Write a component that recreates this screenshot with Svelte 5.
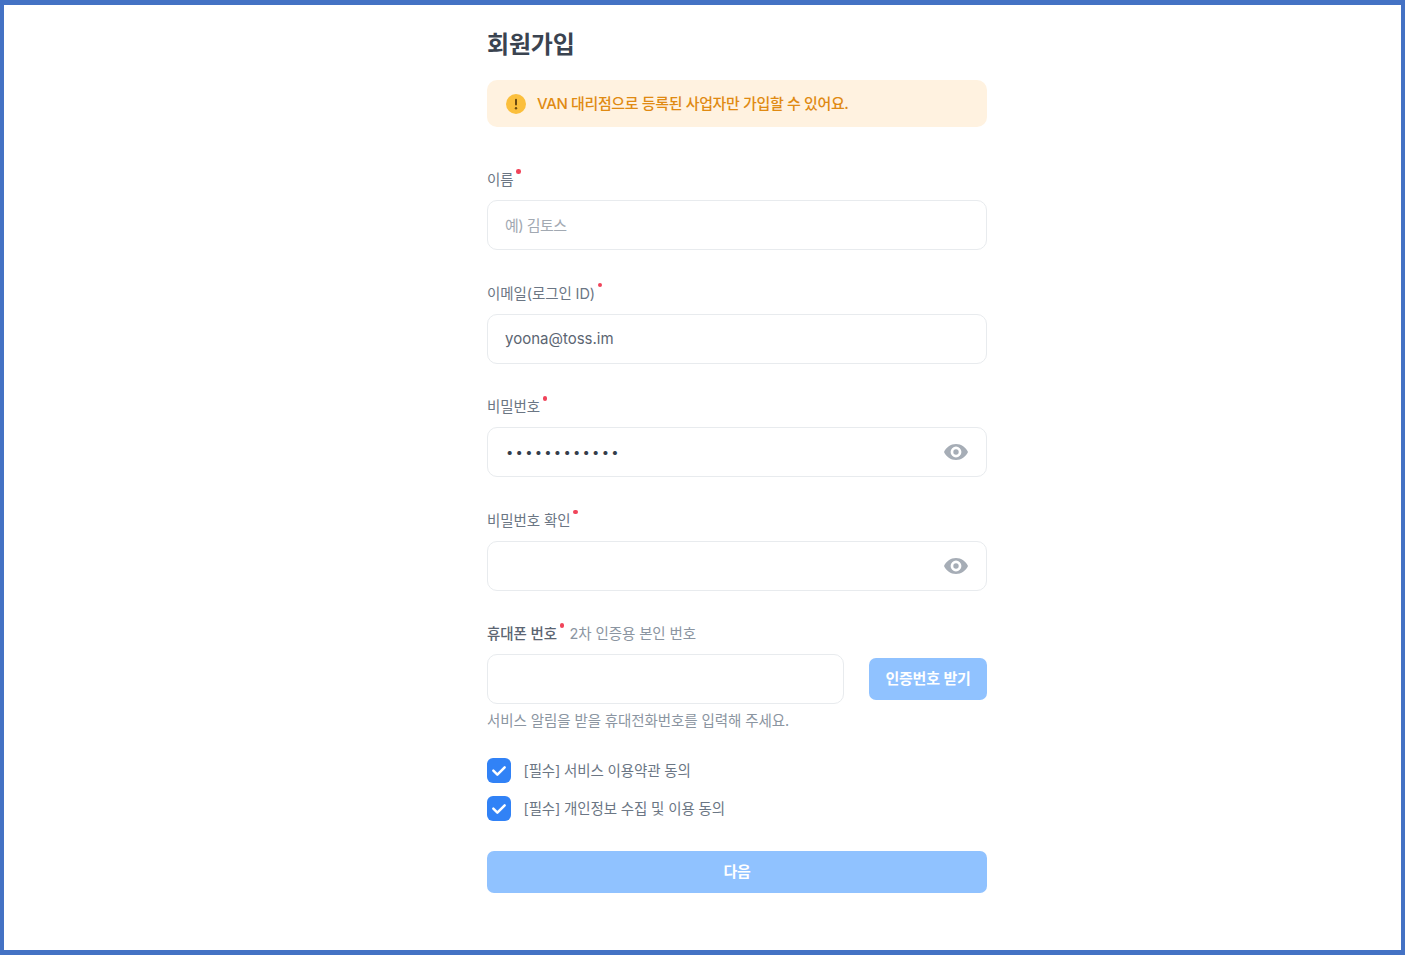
<script lang="ts">
    interface Field {
        label: string;
        type: string;
        placeholder?: string;
        value?: string;
        eye?: boolean;
    }

    const fields: Field[] = [
        { label: "이름", type: "text", placeholder: "예) 김토스" },
        { label: "이메일(로그인 ID)", type: "text", value: "yoona@toss.im" },
        { label: "비밀번호", type: "password", value: "123456789012", eye: true },
        { label: "비밀번호 확인", type: "password", eye: true }
    ];

    const agreements = ["[필수] 서비스 이용약관 동의", "[필수] 개인정보 수집 및 이용 동의"];
</script>

<div class="page">
    <main class="form">
        <h1>회원가입</h1>

        <div class="alert">
            <svg class="alert-icon" viewBox="0 0 20 20" width="20" height="20" aria-hidden="true">
                <circle cx="10" cy="10" r="10" fill="#fbbf3c" />
                <rect x="9" y="4.8" width="2" height="6.8" rx="1" fill="#6b4a10" />
                <circle cx="10" cy="14.2" r="1.2" fill="#6b4a10" />
            </svg>
            <span class="alert-text">VAN 대리점으로 등록된 사업자만 가입할 수 있어요.</span>
        </div>

        {#each fields as f}
            <div class="field">
                <div class="label">{f.label}<i class="req"></i></div>
                <div class="input-wrap">
                    <input type={f.type} placeholder={f.placeholder} value={f.value ?? ""} readonly />
                    {#if f.eye}
                        <svg class="eye" viewBox="0 0 24 16" width="24" height="16" aria-hidden="true">
                            <path
                                fill="#a6adb6"
                                fill-rule="evenodd"
                                d="M12 0C6.6 0 2.2 3.3 0 8c2.2 4.7 6.6 8 12 8s9.8-3.3 12-8c-2.2-4.7-6.6-8-12-8zm0 2.6a5.4 5.4 0 1 1 0 10.8 5.4 5.4 0 0 1 0-10.8z"
                            />
                            <circle cx="12" cy="8" r="2.7" fill="#a6adb6" />
                        </svg>
                    {/if}
                </div>
            </div>
        {/each}

        <div class="field phone">
            <div class="label">
                <span class="strong">휴대폰 번호</span><i class="req"></i><span class="hint">2차 인증용 본인 번호</span>
            </div>
            <div class="phone-row">
                <div class="input-wrap"><input type="text" readonly /></div>
                <button class="btn small" type="button">인증번호 받기</button>
            </div>
            <p class="help">서비스 알림을 받을 휴대전화번호를 입력해 주세요.</p>
        </div>

        <div class="agreements">
            {#each agreements as a}
                <div class="check">
                    <span class="box">
                        <svg viewBox="0 0 25 25" width="24" height="25" aria-hidden="true">
                            <path d="M6.6 12.6l4.2 4.2 7.6-7.6" fill="none" stroke="#fff" stroke-width="2.6" stroke-linecap="round" stroke-linejoin="round" />
                        </svg>
                    </span>
                    <span class="check-text">{a}</span>
                </div>
            {/each}
        </div>

        <button class="btn next" type="button">다음</button>
    </main>
</div>

<style>
    :global(body) {
        margin: 0;
        background: #fff;
    }

    .page {
        box-sizing: border-box;
        height: 955px;
        border: 4px solid #4472c4;
        border-top-width: 5px;
        border-bottom-width: 5px;
        background: #fff;
        font-family: Inter, "Noto Sans CJK KR", sans-serif;
        letter-spacing: -0.1px;
    }

    .form {
        width: 500px;
        margin-left: 483px;
    }

    h1 {
        margin: 0;
        padding-top: 23px;
        height: 55px;
        box-sizing: border-box;
        font-size: 24px;
        line-height: 34px;
        font-weight: 600;
        letter-spacing: -0.2px;
        color: #3a4350;
    }

    .alert {
        display: flex;
        align-items: center;
        gap: 11px;
        height: 47px;
        margin: 20px 0 0;
        padding-left: 19px;
        box-sizing: border-box;
        border-radius: 10px;
        background: #fff2e0;
        color: #e08a12;
        font-size: 15px;
        font-weight: 500;
        letter-spacing: -0.37px;
    }

    .alert-icon {
        flex: none;
    }
    .alert-text {
        margin-bottom: 2px;
    }

    .field {
        margin-top: 29.5px;
    }
    .alert + .field {
        margin-top: 39px;
    }

    .label {
        display: flex;
        align-items: center;
        box-sizing: border-box;
        height: 26px;
        padding-bottom: 1px;
        margin-bottom: 8px;
        font-size: 14.5px;
        font-weight: 400;
        color: #6b7684;
    }

    .req {
        width: 4.5px;
        height: 4.5px;
        margin: -14px 0 0 3px;
        border-radius: 50%;
        background: #f0445a;
    }

    .strong {
        font-weight: 500;
        color: #5b6572;
    }
    .hint {
        margin-left: 5px;
        font-weight: 400;
        color: #8b95a1;
    }

    .input-wrap {
        position: relative;
    }

    input {
        display: block;
        box-sizing: border-box;
        width: 100%;
        height: 50px;
        padding: 0 17px;
        border: 1px solid #e8ebee;
        border-radius: 10px;
        outline: none;
        background: #fff;
        font-family: inherit;
        font-size: 15px;
        letter-spacing: 0;
        color: #5b6572;
    }
    input::placeholder {
        letter-spacing: -0.55px;
        color: #a2a9b2;
    }
    input[type="password"] {
        padding-left: 18px;
        font-size: 13px;
        letter-spacing: 2.25px;
        color: #333d4b;
    }

    .eye {
        position: absolute;
        top: 17px;
        right: 19px;
    }

    .phone-row {
        display: flex;
        align-items: center;
        justify-content: space-between;
    }
    .phone-row .input-wrap {
        width: 357px;
    }

    .help {
        margin: 7px 0 0;
        font-size: 14.5px;
        line-height: 20px;
        color: #8b95a1;
    }

    .agreements {
        display: flex;
        flex-direction: column;
        gap: 13px;
        margin-top: 27px;
    }

    .check {
        display: flex;
        align-items: center;
        gap: 12.5px;
        font-size: 14.5px;
        letter-spacing: -0.15px;
        color: #6b7684;
    }
    .check-text {
        margin-bottom: 2px;
    }

    .box {
        width: 24px;
        height: 25px;
        border-radius: 6px;
        background: #3182f6;
    }
    .box svg {
        display: block;
    }

    .btn {
        border: 0;
        padding: 0 0 3px;
        border-radius: 7px;
        background: #90c2ff;
        color: #fff;
        font-family: inherit;
        font-size: 15px;
        font-weight: 600;
        letter-spacing: -0.2px;
    }
    .btn.small {
        width: 118px;
        height: 42px;
    }
    .btn.next {
        display: block;
        width: 100%;
        height: 42px;
        margin-top: 30px;
    }
</style>
